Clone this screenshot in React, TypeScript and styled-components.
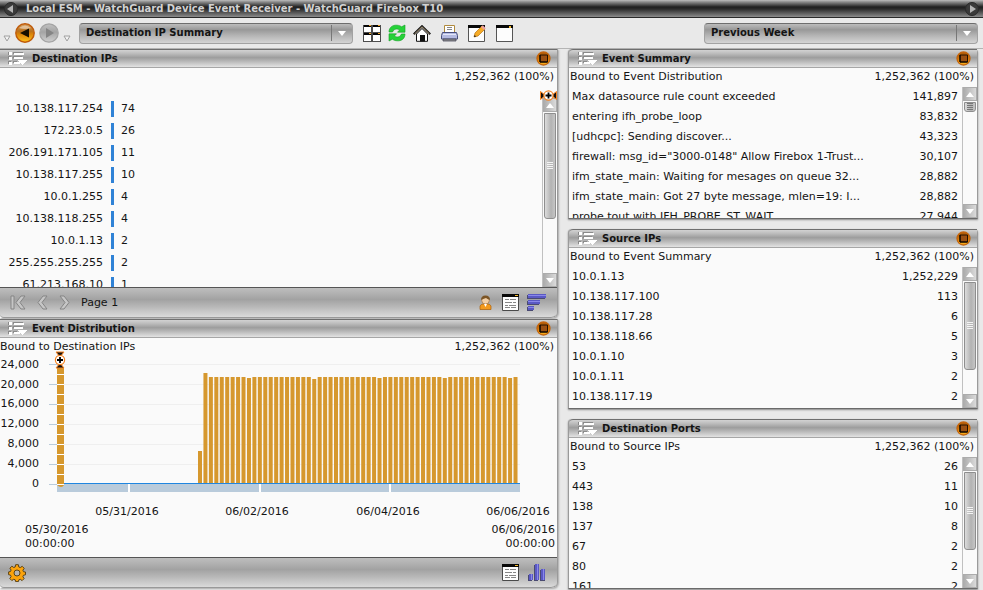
import React from "react";
import styled, { createGlobalStyle, css } from "styled-components";

const GlobalStyle = createGlobalStyle`
  *, *::before, *::after { box-sizing: border-box; }
  body {
    margin: 0;
    background: #e9e9e9;
    color: #141414;
    font: 11px/14px Verdana, "DejaVu Sans", sans-serif;
  }
  svg { display: block; flex: none; }
  button { margin: 0; padding: 0; border: 0; background: none; color: inherit; font: inherit; cursor: pointer; }
`;

/* ---------- frame ---------- */

const Page = styled.div`
  display: flex;
  flex-direction: column;
  height: 100vh;
  min-height: 480px;
  overflow: hidden;
`;

const TitleBar = styled.header`
  display: flex;
  align-items: center;
  gap: 8px;
  flex: none;
  height: 18px;
  padding: 0 4px;
  border-bottom: 1px solid #2a2a2a;
  background: linear-gradient(#bdbdbd 0, #8a8a8a 2px, #4a4a4a 5px, #1f1f1f 7px, #2b2b2b 9px, #666 14px, #8c8c8c 17px);
`;

const Title = styled.h1`
  flex: 1;
  margin: 0;
  color: #d2d2d2;
  font-size: 10px;
  line-height: 14px;
  white-space: nowrap;
`;

const Toolbar = styled.div`
  display: flex;
  align-items: center;
  flex: none;
  height: 31px;
  padding: 0 5px 0 3px;
  border-bottom: 1px solid #b4b4b4;
  background: #e9e9e9;
`;

const HistoryGroup = styled.div`
  display: flex;
  align-items: center;
  gap: 4px;
  width: 76px;
`;

const MenuArrow = styled.button`
  align-self: flex-end;
  padding-bottom: 1px;
`;

const ToolGroup = styled.div<{ $gap: number }>`
  display: flex;
  align-items: center;
  gap: ${(p) => p.$gap}px;
  margin-left: 10px;
`;

const SelectBox = styled.div`
  display: flex;
  align-items: center;
  width: 274px;
  height: 21px;
  border: 1px solid #a2a2a2;
  border-top-color: #6d6d6d;
  border-radius: 4px;
  background: linear-gradient(#bcbcbc, #989898 30%, #b4b4b4 60%, #d4d4d4);
`;

const Select = styled.select`
  flex: 1;
  min-width: 0;
  height: 19px;
  padding: 0 6px;
  border: 0;
  outline: 0;
  appearance: none;
  background: transparent;
  color: #141414;
  font: bold 10px/16px Verdana, "DejaVu Sans", sans-serif;
`;

const SelectArrow = styled.span`
  display: flex;
  align-items: center;
  justify-content: center;
  width: 21px;
  height: 16px;
  border-left: 1px solid #777;
  pointer-events: none;
`;

const Main = styled.main`
  display: grid;
  flex: 1;
  grid-template-columns: minmax(0, 558fr) minmax(0, 410fr);
  gap: 10px;
  min-height: 0;
  padding: 0 5px 1px 0;
`;

const LeftColumn = styled.div`
  display: grid;
  grid-template-rows: minmax(0, 1fr) minmax(0, 1fr);
  gap: 1px;
  min-height: 0;
  padding-bottom: 1px;
`;

const RightColumn = styled.div`
  display: grid;
  grid-template-rows: minmax(0, 170fr) minmax(0, 180fr) minmax(0, 170fr);
  gap: 10px;
  min-height: 0;
`;

/* ---------- panels ---------- */

const PanelBox = styled.section<{ $floating?: boolean }>`
  display: flex;
  flex-direction: column;
  min-height: 0;
  background: #fafafa;
  border-right: 1px solid #9a9a9a;
  ${(p) =>
    p.$floating
      ? css`
          border-left: 1px solid #9a9a9a;
          border-bottom: 1px solid #6a6a6a;
          border-radius: 4px 4px 0 0;
          box-shadow: 0 1px 2px #888;
        `
      : css`
          border-radius: 0 0 6px 0;
          box-shadow: 1px 1px 2px #aaa;
        `}
`;

const PanelHeader = styled.header<{ $floating?: boolean }>`
  display: flex;
  align-items: center;
  gap: 5px;
  flex: none;
  height: 19px;
  padding: 0 6px 0 ${(p) => (p.$floating ? "9px" : "8px")};
  border-top: 1px solid #6f6f6f;
  border-bottom: 1px solid #a6a6a6;
  border-radius: ${(p) => (p.$floating ? "4px 0 0 0" : "0")};
  background: linear-gradient(#d2d2d2, #bdbdbd 20%, #9d9d9d 45%, #bcbcbc 70%, #e2e2e2);
`;

const PanelTitle = styled.h2`
  flex: 1;
  margin: 0;
  font-size: 10px;
  line-height: 14px;
`;

const Meta = styled.div<{ $floating?: boolean }>`
  display: flex;
  justify-content: space-between;
  align-items: center;
  flex: none;
  height: 19px;
  padding: 0 3px 2px ${(p) => (p.$floating ? "1px" : "0")};
`;

const Total = styled.span`
  margin-left: auto;
`;

const ListArea = styled.div<{ $top?: boolean }>`
  display: flex;
  flex: 1;
  min-height: 0;
  padding-top: ${(p) => (p.$top ? "11px" : "0")};
`;

const ListView = styled.div`
  flex: 1;
  min-width: 0;
  overflow: hidden;
`;

const Table = styled.table`
  width: 100%;
  border-collapse: collapse;
  table-layout: fixed;
`;

const NameCell = styled.td`
  height: 20px;
  padding: 0 0 0 3px;
  white-space: nowrap;
`;

const CountCell = styled.td`
  width: 72px;
  height: 20px;
  padding: 0 4px 0 0;
  text-align: right;
`;

const IpCell = styled.td`
  width: 103px;
  height: 22px;
  padding: 0;
  text-align: right;
  white-space: nowrap;
`;

const HitCell = styled.td`
  height: 22px;
  padding: 0 0 0 8px;
`;

const Hit = styled.div`
  height: 16px;
  padding-left: 7px;
  border-left: 3px solid #2f82d6;
  line-height: 16px;
`;

const PanelFooter = styled.footer`
  display: flex;
  align-items: center;
  gap: 8px;
  flex: none;
  height: 31px;
  padding: 0 10px 0 8px;
  border-top: 1px solid #555;
  border-bottom: 1px solid #999;
  border-radius: 0 0 6px 4px;
  background: linear-gradient(#bebebe, #a2a2a2 40%, #b8b8b8 65%, #dadada);
`;

const Pager = styled.nav`
  display: flex;
  align-items: center;
  gap: 11px;
  flex: 1;
  padding-left: 2px;
`;

const Spacer = styled.span`
  flex: 1;
`;

/* ---------- scroll bar ---------- */

const ScrollTrack = styled.div`
  display: flex;
  flex-direction: column;
  flex: none;
  width: 15px;
  border-left: 1px solid #c0c0c0;
  position: relative;
`;

const ScrollButton = styled.button`
  display: flex;
  align-items: center;
  justify-content: center;
  flex: none;
  height: 14px;
  border: 1px solid #acacac;
  background: linear-gradient(90deg, #adadad, #dadada);
`;

const ScrollRun = styled.div`
  flex: 1;
  min-height: 0;
  padding: 1px 1px 0;
`;

const ScrollThumb = styled.div<{ $size: number }>`
  display: flex;
  align-items: center;
  justify-content: center;
  height: ${(p) => p.$size}%;
  border: 1px solid #8e8e8e;
  border-radius: 0 0 3px 3px;
  background: linear-gradient(90deg, #dcdcdc, #b2b2b2 60%, #c6c6c6);
`;

const RangeMarker = styled.div`
  position: absolute;
  top: -8px;
  right: 0;
`;

const ChartArea = styled.div`
  flex: 1;
  min-height: 0;

  svg {
    width: 100%;
    overflow: visible;
  }
`;

/* ---------- icons ---------- */

const Triangle = ({ up = false }: { up?: boolean }) => (
  <svg width="8" height="5" viewBox="0 0 8 5">
    <path d={up ? "M0 5L4 0L8 5Z" : "M0 0H8L4 5Z"} fill="#fff" />
  </svg>
);

const ListMenuIcon = () => (
  <svg width="19" height="15" viewBox="0 0 19 15" shapeRendering="crispEdges">
    <path d="M0 1h3v3H0zM0 5h3v3H0zM0 10h3v3H0zM5 1h10v2H5zM5 5h9v2H5zM5 10h4v2H5z" fill="#8a8a8a" />
    <path d="M1 1h3v3H1zM1 6h3v3H1zM1 11h3v3H1zM6 2h10v2H6zM6 6h9v2H6zM6 11h6v2H6zM10 9h9l-4.500 5z" fill="#fff" />
  </svg>
);

const PanelButtonIcon = () => (
  <svg width="15" height="15" viewBox="0 0 15 15">
    <defs>
      <linearGradient id="orb" x1="0" y1="0" x2="0" y2="1">
        <stop offset="0" stopColor="#a4560c" />
        <stop offset=".5" stopColor="#d67806" />
        <stop offset="1" stopColor="#ffb820" />
      </linearGradient>
    </defs>
    <circle cx="7.5" cy="7.5" r="6.500" fill="url(#orb)" stroke="#c4640c" strokeWidth="1.300" />
    <path d="M4 4h7.500v7H4z" fill="#9a4f12" stroke="#241000" />
    <path d="M4 4v7h7.500" fill="none" stroke="#000" />
  </svg>
);

const TitleArrow = ({ right = false }: { right?: boolean }) => (
  <svg width="14" height="14" viewBox="0 0 14 14">
    <circle cx="7" cy="7" r="6.5" fill="#3a3a3a" stroke="#2a2a2a" />
    <path d={right ? "M5 3v8l6-4z" : "M9 3v8L3 7z"} fill="#b4b4b4" />
  </svg>
);

const BackIcon = () => (
  <svg width="20" height="20" viewBox="0 0 20 20">
    <defs>
      <linearGradient id="back" x1="0" y1="0" x2="0" y2="1">
        <stop offset="0" stopColor="#d9a260" />
        <stop offset=".4" stopColor="#b8701c" />
        <stop offset=".55" stopColor="#d98208" />
        <stop offset="1" stopColor="#ffc41e" />
      </linearGradient>
    </defs>
    <circle cx="10" cy="10" r="9.2" fill="url(#back)" stroke="#bf5a0a" strokeWidth="1.400" />
    <path d="M4 5Q10 0 16 5Q10 7 4 5z" fill="#fff" opacity=".45" />
    <path d="M14 5.500v9L5 10z" fill="#161000" />
  </svg>
);

const ForwardIcon = () => (
  <svg width="20" height="20" viewBox="0 0 20 20">
    <defs>
      <linearGradient id="fwd" x1="0" y1="0" x2="0" y2="1">
        <stop offset="0" stopColor="#c2c2c2" />
        <stop offset=".45" stopColor="#a4a4a4" />
        <stop offset="1" stopColor="#d0d0d0" />
      </linearGradient>
    </defs>
    <circle cx="10" cy="10" r="9.2" fill="url(#fwd)" stroke="#a4a4a4" strokeWidth="1.2" />
    <path d="M7 5v10l8-5z" fill="#858585" />
  </svg>
);

const HollowTriangle = () => (
  <svg width="8" height="7" viewBox="0 0 8 7">
    <path d="M1 1h6L4 6z" fill="#f2f2f2" stroke="#a0a0a0" />
  </svg>
);

const LayoutIcon = () => (
  <svg width="18" height="17" viewBox="0 0 18 17">
    <path d="M0 0h18v17H0z" fill="#4c4c4c" />
    <path d="M1 2h7v5H1zM10 2h7v5h-7zM1 10h7v6H1zM10 10h7v6h-7z" fill="#fff" />
    <path d="M1 0h7v2H1zM10 0h7v2h-7zM1 8h7v2H1zM10 8h7v2h-7z" fill="#050505" />
    <path d="M6 0h2v1H6zM15 0h2v1h-2zM6 8h2v1H6zM15 8h2v1h-2z" fill="#f4a520" />
  </svg>
);

const RefreshIcon = () => (
  <svg width="18" height="18" viewBox="0 0 18 18" fill="#25d238" stroke="#12a024" strokeWidth=".6">
    <path d="M1 8C1 3 5 .8 9 1.200c2 .1 3.600.8 4.600 1.600L17 1v7.200H9.500L11.600 6C9 4.200 5.600 5 4.600 8z" />
    <path d="M17 10c0 5-4 7.200-8 6.800-2-.1-3.600-.8-4.600-1.600L1 17V9.800h7.500L6.400 12c2.600 1.800 6 1 7-2z" />
  </svg>
);

const HomeIcon = () => (
  <svg width="18" height="17" viewBox="0 0 18 17">
    <path d="M3.500 9L9 3.500 14.500 9v7.300h-11z" fill="#fff" stroke="#111" />
    <path d="M7 10h5v6.500H7z" fill="#111" />
    <path d="M.8 9.300L9 1.300l8.200 8" fill="none" stroke="#111" strokeWidth="2.200" />
    <path d="M1.500 9L9 1.800 16.500 9" fill="none" stroke="#d9c39a" strokeWidth=".8" />
  </svg>
);

const PrintIcon = () => (
  <svg width="17" height="17" viewBox="0 0 17 17">
    <path d="M3.500 8V.5h10V8z" fill="#fff" stroke="#b08a3c" />
    <path d="M6 2.500h5M6 4.500h5" stroke="#888" />
    <path d="M1.500 7.500h14l1 3v3.500H.5v-3.500z" fill="#b5bbe2" stroke="#484f7c" />
    <path d="M2 9.500h13" stroke="#e4e7fa" />
    <path d="M2 14h13v2H2z" fill="#8d8d8d" stroke="#4a4a5c" strokeWidth=".8" />
  </svg>
);

const WindowIcon = ({ edit = false }: { edit?: boolean }) => (
  <svg width="18" height="17" viewBox="0 0 18 17">
    <path d="M.5.5h16v16H.5z" fill="#fdfdfd" stroke="#555" />
    <path d="M0 0h17v3H0z" fill="#080808" />
    <path d="M13 1h2v2h-2z" fill="#f5bb2c" />
    {edit && (
      <>
        <path d="M6 12l1-4 7-7 3 3-7 7z" fill="#f6ab25" stroke="#b87414" strokeWidth=".7" />
        <path d="M13 2l1.800-1.800 3 3L16 5z" fill="#eba0a0" />
        <path d="M6 12l.6-2 1.500 1.400z" fill="#222" />
      </>
    )}
  </svg>
);

const ReportIcon = () => (
  <svg width="17" height="17" viewBox="0 0 17 17">
    <path d="M.5.5h16v16H.5z" fill="#fdfdfd" stroke="#4a4a4a" />
    <path d="M0 0h17v3H0z" fill="#080808" />
    <path d="M13 1h3v1h-3z" fill="#f5bb2c" />
    <path d="M3 5.500h4M8 5.500h6M3 8.500h7M11 8.500h3M3 11.500h3M7 11.500h7M3 13.500h5M9 13.500h5" stroke="#858585" />
  </svg>
);

const UserIcon = () => (
  <svg width="17" height="15" viewBox="-2 0 17 15">
    <path d="M1 14.500V11q1-2 3-2h5q2 0 3 2v3.500z" fill="#f39a1e" stroke="#a9600c" strokeWidth=".7" />
    <circle cx="6.500" cy="5.300" r="3.800" fill="#f2cfa6" stroke="#9a6a34" strokeWidth=".6" />
    <path d="M2 5Q2 0.500 6.500.5T11 5Q8 4 7 3 4 4 2 5z" fill="#7b5526" />
    <path d="M5 9h3l-1.500 3z" fill="#fff" />
  </svg>
);

const SortBarsIcon = () => (
  <svg width="20" height="17" viewBox="0 0 20 17">
    <path d="M0 1h18v4H0zM0 7h12v4H0zM0 13h6v4H0z" fill="#4a4a72" />
    <path d="M1 0h18v4H1zM1 6h12v4H1zM1 12h6v4H1z" fill="#5a59c4" />
    <path d="M1 1h18v1H1zM1 7h12v1H1zM1 13h6v1H1z" fill="#8987ea" />
  </svg>
);

const ColumnsIcon = () => (
  <svg width="20" height="17" viewBox="-1 0 20 17">
    <path d="M0 11h4v6H0zM6 1h4v16H6zM12 6h5v11h-5z" fill="#4a4a72" />
    <path d="M1 10h4v6H1zM7 0h4v16H7zM13 5h4v11h-4z" fill="#5a59c4" />
    <path d="M3 10h1v6H3zM9 0h1v16H9zM15 5h1v11h-1z" fill="#8987ea" />
  </svg>
);

const GearIcon = () => (
  <svg width="18" height="18" viewBox="0 0 18 18">
    <g fill="#fba30c" stroke="#5c4416" strokeWidth="1" strokeLinejoin="round">
      <path d="M7.600.7h2.800l.4 2.300 1.500.6 1.900-1.300 2 2-1.300 1.900.6 1.500 2 .3v2.800l-2 .4-.6 1.500 1.200 1.900-2 2-1.800-1.300-1.500.6-.4 1.700H7.600l-.4-1.800-1.500-.5-1.900 1.200-2-2L3.100 12.600l-.6-1.500L.6 10.700V7.900l1.900-.4.6-1.500-1.200-1.800 2-2 1.800 1.300L7.200 3z" />
      <circle cx="9" cy="9" r="3" fill="#b4b4b4" />
    </g>
  </svg>
);

const PageArrow = ({ kind }: { kind: "first" | "previous" | "next" }) => {
  const shape = {
    first: "M1 1h3v13H1zM11 1h4L10 7.500 15 14h-4L6 7.500z",
    previous: "M6 1h4L5 7.500 10 14H6L1 7.500z",
    next: "M1 1h4l5 6.500L5 14H1l5-6.500z",
  }[kind];
  const width = kind === "first" ? 16 : 11;
  return (
    <svg width={width} height="15" viewBox={`0 0 ${width} 15`}>
      <path d={shape} fill="#c6c6c6" stroke="#858585" />
    </svg>
  );
};

const MarkerShape = () => (
  <>
    <path d="M-8 -4L-3 0L-8 4ZM8 -4L3 0L8 4Z" fill="#111" stroke="#f58220" />
    <circle r="4.600" fill="#fff" stroke="#f58220" strokeWidth="1.200" />
    <path d="M-3 0H3M0 -3V3" stroke="#000" strokeWidth="1.800" />
  </>
);

/* ---------- data ---------- */

type Row = [string, string];

const destinationIps: Row[] = [
  ["10.138.117.254", "74"],
  ["172.23.0.5", "26"],
  ["206.191.171.105", "11"],
  ["10.138.117.255", "10"],
  ["10.0.1.255", "4"],
  ["10.138.118.255", "4"],
  ["10.0.1.13", "2"],
  ["255.255.255.255", "2"],
  ["61.213.168.10", "1"],
];

const eventSummary: Row[] = [
  ["Max datasource rule count exceeded", "141,897"],
  ["entering ifh_probe_loop", "83,832"],
  ["[udhcpc]: Sending discover...", "43,323"],
  ['firewall: msg_id="3000-0148" Allow Firebox 1-Trust...', "30,107"],
  ["ifm_state_main: Waiting for mesages on queue 32...", "28,882"],
  ["ifm_state_main: Got 27 byte message, mlen=19: I...", "28,882"],
  ["probe tout with IFH_PROBE_ST_WAIT", "27,944"],
];

const sourceIps: Row[] = [
  ["10.0.1.13", "1,252,229"],
  ["10.138.117.100", "113"],
  ["10.138.117.28", "6"],
  ["10.138.118.66", "5"],
  ["10.0.1.10", "3"],
  ["10.0.1.11", "2"],
  ["10.138.117.19", "2"],
];

const destinationPorts: Row[] = [
  ["53", "26"],
  ["443", "11"],
  ["138", "10"],
  ["137", "8"],
  ["67", "2"],
  ["80", "2"],
  ["161", "2"],
];

const total = "1,252,362 (100%)";

/* ---------- parts ---------- */

function ScrollBar({ size, marker = false, page = false }: { size: number; marker?: boolean; page?: boolean }) {
  return (
    <ScrollTrack>
      <ScrollButton aria-label="Scroll up">
        <Triangle up />
      </ScrollButton>
      <ScrollRun>
        <ScrollThumb $size={size}>
          <svg width="6" height="8" viewBox="0 0 6 8">
            <path d="M0 .5h6M0 2.500h6M0 4.500h6M0 6.500h6" stroke={page ? "#777" : "#f4f4f4"} />
          </svg>
        </ScrollThumb>
      </ScrollRun>
      <ScrollButton aria-label="Scroll down">
        <Triangle />
      </ScrollButton>
      {marker && (
        <RangeMarker>
          <svg width="17" height="11" viewBox="-8.500 -5.500 17 11">
            <MarkerShape />
          </svg>
        </RangeMarker>
      )}
    </ScrollTrack>
  );
}

function Heading({ title, bound, floating }: { title: string; bound?: string; floating?: boolean }) {
  return (
    <>
      <PanelHeader $floating={floating}>
        <button aria-label={`${title} menu`}>
          <ListMenuIcon />
        </button>
        <PanelTitle>{title}</PanelTitle>
        <button aria-label={`Maximize ${title}`}>
          <PanelButtonIcon />
        </button>
      </PanelHeader>
      <Meta $floating={floating}>
        {bound && <span>{bound}</span>}
        <Total>{total}</Total>
      </Meta>
    </>
  );
}

function CountPanel(props: { title: string; bound: string; rows: Row[]; size: number; page?: boolean }) {
  return (
    <PanelBox $floating>
      <Heading title={props.title} bound={props.bound} floating />
      <ListArea>
        <ListView>
          <Table>
            <tbody>
              {props.rows.map(([name, count]) => (
                <tr key={name}>
                  <NameCell>{name}</NameCell>
                  <CountCell>{count}</CountCell>
                </tr>
              ))}
            </tbody>
          </Table>
        </ListView>
        <ScrollBar size={props.size} page={props.page} />
      </ListArea>
    </PanelBox>
  );
}

const AXIS = 126;
const levels = ["0", "4,000", "8,000", "12,000", "16,000", "20,000", "24,000"];
const dates: [string, number][] = [
  ["05/31/2016", 127],
  ["06/02/2016", 257],
  ["06/04/2016", 388],
  ["06/06/2016", 518],
];
const bars = Array.from({ length: 59 }, (_, i) => (i === 0 ? 32 : i === 1 ? 110 : i === 21 ? 104 : i % 12 === 9 ? 105 : 106));

function DistributionChart() {
  return (
    <svg viewBox="0 0 557 200" role="img" aria-label="Events per two hours" fill="#141414" fontSize="11">
      {levels.map((label, i) => (
        <g key={label}>
          <path d={`M64 ${127.5 - i * 20}H520`} stroke="#efefef" />
          <path d={`M49 ${127.5 - i * 20}H57`} stroke="#b9cbdb" />
          <text x="39" y={130 - i * 20 + (i > 4 ? 1 : 0)} textAnchor="end">
            {label}
          </text>
        </g>
      ))}
      {bars.map((height, i) => (
        <rect key={i} x={198 + i * 5.44} y={AXIS - height} width="4" height={height} fill="#d6982e" />
      ))}
      <path d="M57 127h463v8H57z" fill="#b9cbdb" />
      <path d="M129 127v8M260 127v8M390 127v8" stroke="#fff" strokeWidth="2" />
      <path d={`M57 ${AXIS + 0.5}H520`} stroke="#1f86e0" />
      <path d="M57 10h7v118q-1 2-3 2t-4-2z" fill="#d6982e" />
      {Array.from({ length: 12 }, (_, i) => (
        <path key={i} d={`M57 ${127.5 - i * 10}h7`} stroke="#fff" />
      ))}
      <g transform="translate(60 3) rotate(90)">
        <MarkerShape />
      </g>
      {dates.map(([label, x]) => (
        <text key={label} x={x} y="158" textAnchor="middle">
          {label}
        </text>
      ))}
      <text x="25" y="176">05/30/2016</text>
      <text x="25" y="190">00:00:00</text>
      <text x="555" y="176" textAnchor="end">06/06/2016</text>
      <text x="555" y="190" textAnchor="end">00:00:00</text>
    </svg>
  );
}

function Picker({ label, value }: { label: string; value: string }) {
  return (
    <SelectBox>
      <Select aria-label={label} defaultValue={value}>
        <option>{value}</option>
      </Select>
      <SelectArrow>
        <Triangle />
      </SelectArrow>
    </SelectBox>
  );
}

export default function App() {
  return (
    <>
      <GlobalStyle />
      <Page>
        <TitleBar>
          <button aria-label="Previous pane">
            <TitleArrow />
          </button>
          <Title>Local ESM - WatchGuard Device Event Receiver - WatchGuard Firebox T10</Title>
          <button aria-label="Next pane">
            <TitleArrow right />
          </button>
        </TitleBar>
        <Toolbar>
          <HistoryGroup>
            <MenuArrow aria-label="Back history">
              <HollowTriangle />
            </MenuArrow>
            <button aria-label="Back">
              <BackIcon />
            </button>
            <button aria-label="Forward">
              <ForwardIcon />
            </button>
            <MenuArrow aria-label="Forward history">
              <HollowTriangle />
            </MenuArrow>
          </HistoryGroup>
          <Picker label="View" value="Destination IP Summary" />
          <ToolGroup $gap={7}>
            <button aria-label="Layout"><LayoutIcon /></button>
            <button aria-label="Refresh"><RefreshIcon /></button>
            <button aria-label="Home"><HomeIcon /></button>
          </ToolGroup>
          <ToolGroup $gap={10}>
            <button aria-label="Print"><PrintIcon /></button>
            <button aria-label="Edit view"><WindowIcon edit /></button>
            <button aria-label="New view"><WindowIcon /></button>
          </ToolGroup>
          <Spacer />
          <Picker label="Time range" value="Previous Week" />
        </Toolbar>
        <Main>
          <LeftColumn>
            <PanelBox>
              <Heading title="Destination IPs" />
              <ListArea $top>
                <ListView>
                  <Table>
                    <tbody>
                      {destinationIps.map(([ip, hits]) => (
                        <tr key={ip}>
                          <IpCell>{ip}</IpCell>
                          <HitCell>
                            <Hit>{hits}</Hit>
                          </HitCell>
                        </tr>
                      ))}
                    </tbody>
                  </Table>
                </ListView>
                <ScrollBar size={66} marker />
              </ListArea>
              <PanelFooter>
                <Pager aria-label="Pages">
                  <button aria-label="First page"><PageArrow kind="first" /></button>
                  <button aria-label="Previous page"><PageArrow kind="previous" /></button>
                  <button aria-label="Next page"><PageArrow kind="next" /></button>
                  <span>Page 1</span>
                </Pager>
                <button aria-label="Users"><UserIcon /></button>
                <button aria-label="Details"><ReportIcon /></button>
                <button aria-label="Chart type"><SortBarsIcon /></button>
              </PanelFooter>
            </PanelBox>
            <PanelBox>
              <Heading title="Event Distribution" bound="Bound to Destination IPs" />
              <ChartArea>
                <DistributionChart />
              </ChartArea>
              <PanelFooter>
                <button aria-label="Settings"><GearIcon /></button>
                <Spacer />
                <button aria-label="Details"><ReportIcon /></button>
                <button aria-label="Chart type"><ColumnsIcon /></button>
              </PanelFooter>
            </PanelBox>
          </LeftColumn>
          <RightColumn>
            <CountPanel title="Event Summary" bound="Bound to Event Distribution" rows={eventSummary} size={10} page />
            <CountPanel title="Source IPs" bound="Bound to Event Summary" rows={sourceIps} size={79} />
            <CountPanel title="Destination Ports" bound="Bound to Source IPs" rows={destinationPorts} size={76} />
          </RightColumn>
        </Main>
      </Page>
    </>
  );
}
